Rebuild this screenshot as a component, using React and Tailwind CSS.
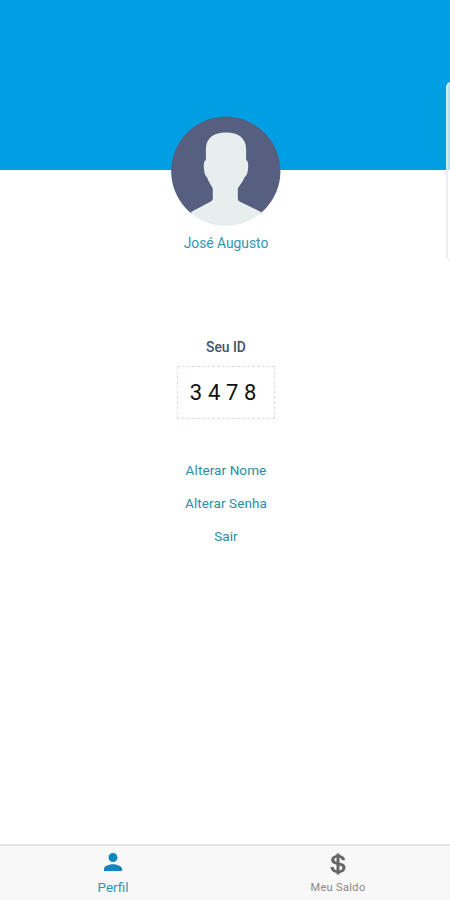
import React, { useState } from "react";
import cl from "clsx";
import { IoMdPerson, IoLogoUsd } from "react-icons/io";

const user = { name: "José Augusto", id: "3478" };
const actions = ["Alterar Nome", "Alterar Senha", "Sair"];

const Avatar = () => (
  <svg className="block size-[110px]" viewBox="0 0 110 110">
    <defs>
      <clipPath id="avatar">
        <circle cx="54.8" cy="55.2" r="54.6" />
      </clipPath>
    </defs>
    <g clipPath="url(#avatar)">
      <rect width="110" height="98" fill="#565f80" />
      <path
        fill="#e7eeee"
        d="M55 16.6C43 16.6 34.9 22 34.9 33V44C32.8 44.8 32.6 48 32.9 52C33.3 57 34 59.5 36 61.3C37.5 66 40 69 41.8 72.5V82C41.8 84 41.2 84.6 39.8 85.4L20 96V110H90V96L68.6 85.4C67.2 84.6 66.8 84 66.8 82V72.5C68.8 69 71.8 66 73.6 61.3C75.8 59.5 76.7 57 77.1 52C77.4 48 77.2 44.8 75.1 44V33C75.1 22 67 16.6 55 16.6Z"
      />
    </g>
  </svg>
);

const Tab = ({ title, icon, active, onClick }) => (
  <button
    onClick={onClick}
    className={cl(
      "flex flex-1 flex-col items-center pl-[1px]",
      active ? "text-[#0f86c0]" : "text-[#666666]"
    )}
  >
    {icon}
    {title}
  </button>
);

const App = () => {
  const [tab, setTab] = useState("perfil");

  return (
    <div className="relative flex h-[900px] w-[450px] flex-col overflow-hidden bg-white font-['Roboto',sans-serif]">
      <header className="h-[170px] shrink-0 bg-[#009fe3]"></header>
      <main className="-mt-[54px] flex flex-1 flex-col items-center pl-[2px]">
        <Avatar />
        <h1 className="mt-[8px] text-[13.8px] leading-[18px] text-[#2b99b5]">
          {user.name}
        </h1>
        <h2 className="mt-[86px] text-[13.8px] leading-[18px] font-medium text-[#40545f]">
          Seu ID
        </h2>
        <div className="mt-[10px] flex h-[53px] w-[98px] items-center justify-center border border-dashed border-[#d3e2df] text-[22px] tracking-[5.7px] text-[#111111]">
          {user.id}
        </div>
        <div className="mt-[35px] flex flex-col items-center">
          {actions.map((action) => (
            <button
              key={action}
              className="h-[33px] text-[13.5px] tracking-[0.1px] text-[#248fa6]"
            >
              {action}
            </button>
          ))}
        </div>
      </main>
      <nav className="flex h-[56px] shrink-0 border-t-2 border-[#e6e6e6] bg-[#f8f8f8]">
        <Tab
          active={tab === "perfil"}
          onClick={() => setTab("perfil")}
          icon={<IoMdPerson className="mt-[4px] size-[24px] shrink-0" />}
          title={
            <span className="mt-[4px] text-[13.5px] leading-[18px] text-[#3197b8]">
              Perfil
            </span>
          }
        />
        <Tab
          active={tab === "saldo"}
          onClick={() => setTab("saldo")}
          icon={<IoLogoUsd className="mt-[6px] size-[24px] shrink-0" />}
          title={
            <span className="mt-[3px] text-[11px] leading-[18px] tracking-[0.35px] text-[#888888]">
              Meu Saldo
            </span>
          }
        />
      </nav>
      {/* edge panel handle */}
      <div className="absolute top-[82px] left-[446px] h-[179px] w-[12px] rounded-[5px] border-2 border-[#e4eaed]/70 bg-white/70"></div>
    </div>
  );
};

export default App;
